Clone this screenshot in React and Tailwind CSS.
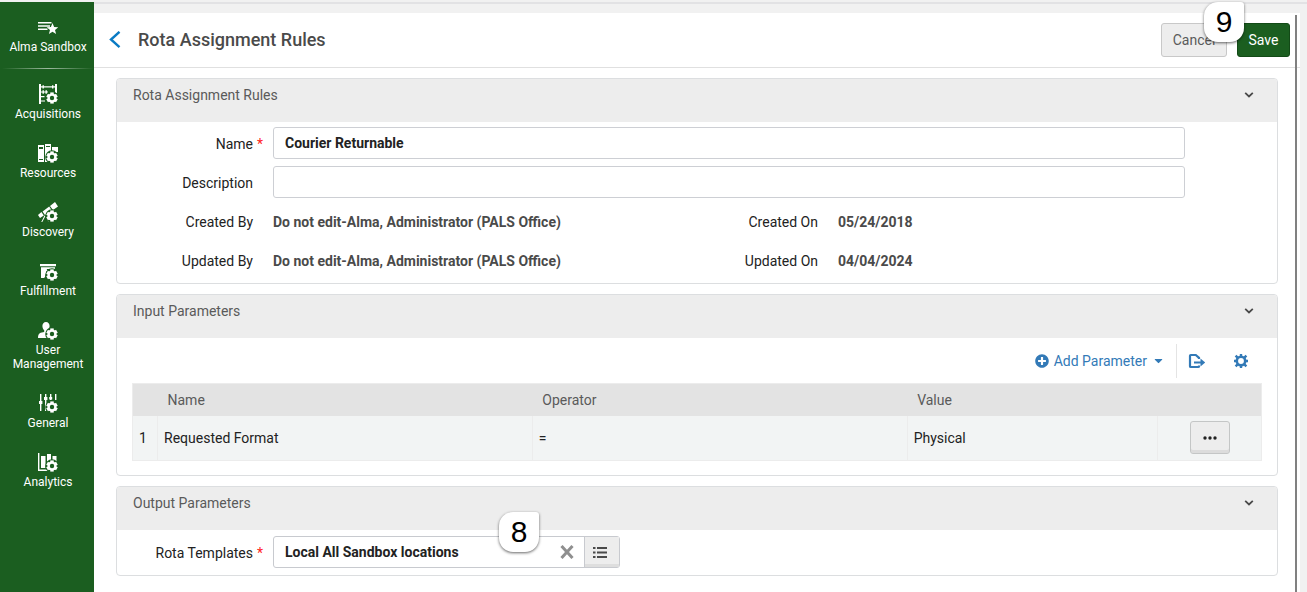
import React from "react";
import { FaPlusCircle, FaCaretDown } from "react-icons/fa";

// Small gear that sits on the lower right of most menu icons
function MiniGear() {
    return (
        <g>
            <circle cx="14" cy="14" r="6.800" fill="#1b5e20" />
            <g stroke="#fff" strokeWidth="3.400">
                <path d="M14 8.400v11.200" />
                <path d="M9.100 11.200l9.800 5.600" />
                <path d="M9.100 16.800l9.800-5.600" />
            </g>
            <circle cx="14" cy="14" r="4.500" fill="#fff" />
            <circle cx="14" cy="14" r="2.200" fill="#1b5e20" />
        </g>
    );
}

const menuItems = [
    {
        label: "Acquisitions",
        icon: (
            <g fill="#fff">
                <path d="M1 0h2v20H1zM17 0h2v9h-2zM3 2.200h14v1.400H3zM3 7.400h7v1.200H3zM3 12h3.500v1.200H3zM3 16.400h4v1.200H3z" />
                <path d="M4.500 1.200h1.400v3.400H4.500zM14 1.200h1.400v3.400H14zM4.500 6.300h1.400v3.400H4.500zM7.500 6.300h1.400v3.400H7.500z" />
            </g>
        ),
    },
    {
        label: "Resources",
        icon: (
            <g fill="#fff">
                <path fillRule="evenodd" d="M0 2h6v17H0zM1 4v2h4V4zM1 16v1h4v-1z" />
                <path fillRule="evenodd" d="M7 1h6v18H7zM8 3v1h4V3z" />
                <path d="M14 4h6v5h-6z" />
            </g>
        ),
    },
    {
        label: "Discovery",
        icon: (
            <g fill="#fff">
                <path d="M12 4l5-4 3 4.400-5 3.600zM4.600 9.400l6.600-4.800 2.600 3.800L7 13zM0 13l3.400-3 2.400 3.600L2 16z" />
                <path d="M6.500 13.500l1 .5L4 20.500H3zM9.500 17l2.500 3.500h-1.200l-2-3z" />
            </g>
        ),
    },
    {
        label: "Fulfillment",
        icon: (
            <g fill="#fff">
                <path d="M2 3h16v2.200H2zM3 6.200h14v1.800H3zM3 9h3.500v8H3zM7.500 9H17v1H7.500z" />
                <path d="M3 8h6l-2 8H3z" />
            </g>
        ),
    },
    {
        label: "User Management",
        icon: (
            <g fill="#fff">
                <path d="M8 2c2.200 0 3.600 1.700 3.600 4 0 1.900-.8 3.500-1.800 4.300V12l2.200 1v5H0c0-3 .8-4.600 2.600-5.300L6.200 12v-1.700C5.200 9.500 4.400 7.900 4.400 6c0-2.300 1.400-4 3.600-4z" />
            </g>
        ),
    },
    {
        label: "General",
        icon: (
            <g fill="#fff">
                <path d="M2 1h1.400v17H2zM7 1h1.400v17H7zM12 1h1.400v6H12zM17 1h1.400v6H17z" />
                <path d="M1 8h3.400v3H1zM6 4h3.400v3H6zM11.200 4h3v2.500h-3z" />
            </g>
        ),
    },
    {
        label: "Analytics",
        icon: (
            <g fill="#fff">
                <path d="M0 1h1.400v16.600H10V19H0z" />
                <path d="M3 4h4.500v12H3zM9 2h4v14H9zM14.500 4h4v6h-4z" />
            </g>
        ),
    },
];

function Sidebar() {
    return (
        <nav className="w-[94px] shrink-0 pl-0.5 bg-[#1b5e20] text-white text-xs leading-[14px] text-center">
            <a href="#sandbox" className="flex flex-col items-center pt-[18px] pb-3.5">
                <svg width="20" height="20" viewBox="0 0 20 20" fill="#fff">
                    <path d="M0 2h13.500v1.500H0zM0 5.300h12v1.500H0zM0 8.600h9.500v1.500H0z" />
                    <path d="M14.500 3l1.600 4 4.200.2-3.300 2.700 1.100 4.200-3.600-2.400-3.600 2.400 1.100-4.200-3.300-2.700 4.200-.2z" />
                </svg>
                Alma Sandbox
            </a>
            <div className="h-px bg-linear-to-r from-transparent via-[#9dba9f] to-transparent" />
            <ul className="flex flex-col gap-[22px] pt-[15px] pb-6">
                {menuItems.map((item) => (
                    <li key={item.label}>
                        <a href={`#${item.label}`} className="flex flex-col items-center gap-[3px] px-2">
                            <svg width="20" height="20" viewBox="0 0 20 20">
                                {item.icon}
                                <MiniGear />
                            </svg>
                            {item.label}
                        </a>
                    </li>
                ))}
            </ul>
        </nav>
    );
}

function Panel({ title, children }) {
    return (
        <section className="border border-[#dcdee0] rounded bg-white overflow-hidden">
            <div className="flex justify-between bg-[#ededed] h-[43px] pl-4 pr-[23px] pt-1.5">
                <h2 className="text-sm leading-5 text-[#5a5a5a]">{title}</h2>
                <button type="button" aria-label={`Collapse ${title}`} className="h-5">
                    <svg width="10" height="6" viewBox="0 0 10 6" fill="none" stroke="#4a4a4a" strokeWidth="1.800">
                        <path d="M1.200 .8L5 4.400 8.800 .8" />
                    </svg>
                </button>
            </div>
            {children}
        </section>
    );
}

function Required() {
    return <span className="text-[#f22] w-2.5 text-right">*</span>;
}

function FieldLabel({ htmlFor, required, children }) {
    return (
        <label htmlFor={htmlFor} className="w-[156px] shrink-0 flex justify-end pr-2.5 pt-0.5 text-[#222]">
            {children}
            {required ? <Required /> : <span className="w-2.5" />}
        </label>
    );
}

function InfoRow({ label, value, second, secondValue }) {
    return (
        <dl className="grid grid-cols-2 h-8 pt-0.5 items-center">
            <div className="flex">
                <dt className="w-[136px] text-right mr-5 text-[#222]">{label}</dt>
                <dd className="font-bold text-[#4a4a4a]">{value}</dd>
            </div>
            <div className="flex">
                <dt className="w-[121px] text-right mr-5 text-[#222]">{second}</dt>
                <dd className="font-bold text-[#4a4a4a]">{secondValue}</dd>
            </div>
        </dl>
    );
}

function StepBadge({ number, className }) {
    return (
        <span
            className={`absolute z-10 flex size-10 items-center justify-center rounded-[14px] rounded-tr-[3px] bg-white text-black text-[30px] leading-10 font-['Liberation_Sans',sans-serif] shadow-[0_1px_3px_rgba(0,0,0,0.6)] ${className}`}
        >
            {number}
        </span>
    );
}

function ParameterTable() {
    return (
        <table className="w-full table-fixed border-collapse border border-[#ececec] text-left">
            <thead>
                <tr className="h-8 bg-[#e3e3e3] text-[#5a5a5a]">
                    <th className="w-[25px]" aria-label="Row" />
                    <th className="w-[33.2%] font-normal pl-2.5">Name</th>
                    <th className="w-[33.2%] font-normal pl-2.5">Operator</th>
                    <th className="font-normal pl-2.5">Value</th>
                    <th className="w-[104px]" aria-label="Actions" />
                </tr>
            </thead>
            <tbody>
                <tr className="h-[45px] bg-[#f2f4f4] text-[#222]">
                    <td className="pl-1.5">1</td>
                    <td className="border-l border-[#ececec] pl-1.5">Requested Format</td>
                    <td className="border-l border-[#ececec] pl-1.5">=</td>
                    <td className="border-l border-[#ececec] pl-1.5">Physical</td>
                    <td className="border-l border-[#ececec]">
                        <button
                            type="button"
                            aria-label="Row actions"
                            className="flex items-center justify-center w-10 h-[33px] mx-auto rounded-[3px] border border-[#c4c6c6] bg-[#ededed] shadow-[inset_0_-3px_0_#dcdcdc]"
                        >
                            <svg width="14" height="4" viewBox="0 0 14 4" fill="#222">
                                <circle cx="2" cy="2" r="1.700" />
                                <circle cx="7" cy="2" r="1.700" />
                                <circle cx="12" cy="2" r="1.700" />
                            </svg>
                        </button>
                    </td>
                </tr>
            </tbody>
        </table>
    );
}

function App() {
    return (
        <div className="min-h-screen flex flex-col bg-[#f1f1f1] text-sm leading-5 font-[Roboto,sans-serif]">
            <div className="flex flex-1 pt-0.5">
                <Sidebar />
                <div className="flex-1 flex flex-col min-w-0 border-t-2 border-[#e2e2e4] pt-[9px] pr-[7px]">
                    <main className="relative flex-1 bg-white">
                        {/* Scroll track on the right edge */}
                        <div className="absolute right-[3px] top-0.5 bottom-0 w-0.5 bg-[#808080]" />

                        <header className="flex items-center h-[55px] pl-[15px] pr-2.5 border-b border-[#e0e0e0]">
                            <a href="#back" aria-label="Back">
                                <svg width="12" height="18" viewBox="0 0 12 18" fill="none" stroke="#0a7bc4" strokeWidth="2.400">
                                    <path d="M10.500 .8L2 8.500l8.500 7.700" />
                                </svg>
                            </a>
                            <h1 className="ml-[17px] flex-1 text-lg font-medium text-[#4a4a4a]">Rota Assignment Rules</h1>
                            <div className="relative flex gap-2.5">
                                <button type="button" className="w-[66px] h-[34px] rounded-[3px] border border-[#c8c8c8] bg-[#ededed] text-[#5a5a5a]">
                                    Cancel
                                </button>
                                <button type="button" className="w-[53px] h-[34px] rounded-[3px] border border-[#134a17] bg-[#1b5e20] text-white">
                                    Save
                                </button>
                                <StepBadge number="9" className="right-[46px] -top-[21px]" />
                            </div>
                        </header>

                        <form className="flex flex-col gap-2.5 px-[22px] pt-2.5 pb-4">
                            <Panel title="Rota Assignment Rules">
                                <div className="flex flex-col gap-[7px] pt-[5px] pb-[7px]">
                                    <div className="flex items-center pr-[92px]">
                                        <FieldLabel htmlFor="name" required>Name</FieldLabel>
                                        <input
                                            id="name"
                                            type="text"
                                            defaultValue="Courier Returnable"
                                            className="flex-1 min-w-0 h-8 px-[11px] rounded-[3px] border border-[#cdcfd4] font-bold text-[#222]"
                                        />
                                    </div>
                                    <div className="flex items-center pr-[92px]">
                                        <FieldLabel htmlFor="description">Description</FieldLabel>
                                        <input
                                            id="description"
                                            type="text"
                                            className="flex-1 min-w-0 h-8 px-[11px] rounded-[3px] border border-[#cdcfd4] font-bold text-[#222]"
                                        />
                                    </div>
                                    <InfoRow
                                        label="Created By"
                                        value="Do not edit-Alma, Administrator (PALS Office)"
                                        second="Created On"
                                        secondValue="05/24/2018"
                                    />
                                    <InfoRow
                                        label="Updated By"
                                        value="Do not edit-Alma, Administrator (PALS Office)"
                                        second="Updated On"
                                        secondValue="04/04/2024"
                                    />
                                </div>
                            </Panel>

                            <Panel title="Input Parameters">
                                <div className="px-[15px] pb-3.5">
                                    <div className="flex justify-end items-center h-[45px] text-[#337ab7]">
                                        <button type="button" className="flex items-center gap-[5px] mr-[11px]">
                                            <FaPlusCircle size={14} />
                                            Add Parameter
                                            <FaCaretDown size={13} />
                                        </button>
                                        <span className="w-px h-[34px] bg-[#e4e4e4]" />
                                        <button type="button" aria-label="Export" className="ml-[11px]">
                                            <svg width="18" height="16" viewBox="0 0 18 16" fill="none" stroke="#337ab7" strokeWidth="2.200">
                                                <path d="M11 6V4.800L7.800 2H2.800Q2 2 2 2.800v10.400q0 .8.8.8h7.400q.8 0 .8-.8V12.500" />
                                                <path d="M6 9.500h8" />
                                                <path d="M12.500 5.600l4.700 3.900-4.700 3.900z" fill="#337ab7" stroke="none" />
                                            </svg>
                                        </button>
                                        <button type="button" aria-label="Settings" className="ml-7 mr-3.5">
                                            <svg width="14" height="14" viewBox="0 0 14 14" fill="none" stroke="#337ab7">
                                                <circle cx="7" cy="7" r="4.200" strokeWidth="2.600" />
                                                <path
                                                    strokeWidth="2.400"
                                                    d="M7 0v2.500M7 11.500V14M0 7h2.500M11.500 7H14M1.600 1.600l2 2M10.400 10.400l2 2M12.400 1.600l-2 2M3.600 10.400l-2 2"
                                                />
                                            </svg>
                                        </button>
                                    </div>
                                    <ParameterTable />
                                </div>
                            </Panel>

                            <Panel title="Output Parameters">
                                <div className="flex items-center pt-1.5 pb-[7px]">
                                    <FieldLabel htmlFor="template" required>Rota Templates</FieldLabel>
                                    <div className="relative flex w-[347px] h-8 rounded-[3px] border border-[#c8cacf]">
                                        <input
                                            id="template"
                                            type="text"
                                            defaultValue="Local All Sandbox locations"
                                            className="flex-1 min-w-0 px-[11px] font-bold text-[#222]"
                                        />
                                        <button type="button" aria-label="Clear" className="px-2.5">
                                            <svg width="14" height="14" viewBox="0 0 14 14" stroke="#8f8f8f" strokeWidth="3">
                                                <path d="M1.500 1l11 12M12.500 1l-11 12" />
                                            </svg>
                                        </button>
                                        <button
                                            type="button"
                                            aria-label="Pick from list"
                                            className="flex items-center w-[35px] pl-2 border-l border-[#c8cacf] bg-[#ededed] shadow-[inset_0_-3px_0_#dedede]"
                                        >
                                            <svg width="14" height="11" viewBox="0 0 14 11" fill="#4a4a4a">
                                                <path d="M0 0h2.500v2H0zM4 0h10v2H4zM0 4.500h2.500v2H0zM4 4.500h10v2H4zM0 9h2.500v2H0zM4 9h10v2H4z" />
                                            </svg>
                                        </button>
                                        <StepBadge number="8" className="right-20 -top-[25px]" />
                                    </div>
                                </div>
                            </Panel>
                        </form>
                    </main>
                </div>
            </div>
        </div>
    );
}

export default App;
